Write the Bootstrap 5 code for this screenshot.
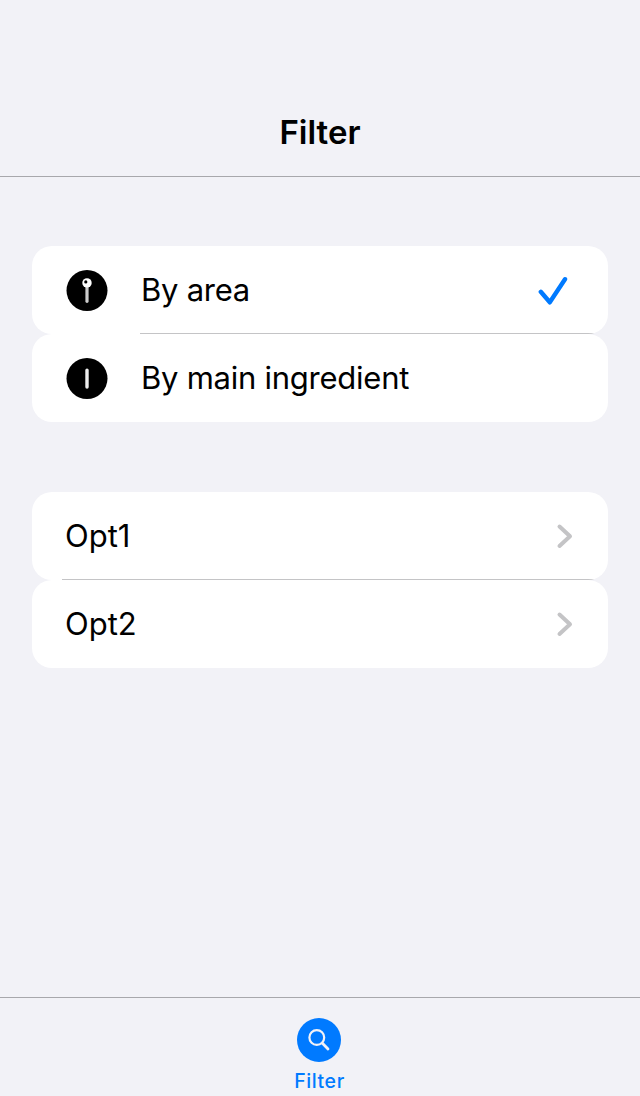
<!DOCTYPE html>
<html lang="en">
<head>
<meta charset="utf-8">
<meta name="viewport" content="width=device-width, initial-scale=1">
<title>Filter</title>
<link href="https://cdn.jsdelivr.net/npm/bootstrap@5.3.0/dist/css/bootstrap.min.css" rel="stylesheet">
<style>
body { font-family: Inter, "Liberation Sans", sans-serif; background: #f2f2f7; color: #000; }
svg { display: block; flex: none; }
.title-bar { height: 177px; padding-bottom: 24px; border-bottom: 1px solid #a8a8ac; }
.title-bar h1 { font-size: 33px; line-height: 40px; font-weight: 600; letter-spacing: 0; }
.options { padding: 69px 32px 0; gap: 70px; }
.option { height: 88px; border-radius: 20px; overflow: hidden; }
.option-body { height: 88px; font-size: 31px; line-height: 40px; padding-top: 1px; }
.option-icon { margin: 0 33px 0 34px; }
.area-text { letter-spacing: -.25px; padding-bottom: 2px; }
.opt-text { margin-left: 33px; letter-spacing: 0; padding-bottom: 2px; }
.divided .option-body { height: 87px; padding-top: 2px; }
.divider { height: 1px; background: #c4c4c6; }
.after-icon { margin-left: 108px; }
.after-edge { margin-left: 30px; }
.selected-mark { margin-right: 40px; }
.chevron { margin-right: 25px; }
.tab-bar { height: 99px; border-top: 1px solid #a8a8ac; padding: 20px 2px 0 0; }
.tab-link { color: #007aff; font-size: 19.5px; line-height: 24px; font-weight: 500; letter-spacing: .6px; }
.tab-link span { margin-top: 7px; padding-left: 1px; }
</style>
</head>
<body class="vh-100 d-flex flex-column overflow-hidden">
<header class="title-bar d-flex align-items-end justify-content-center"><h1 class="m-0">Filter</h1></header>
<main class="options d-flex flex-column flex-grow-1">
  <section>
    <div class="option divided bg-white">
      <div class="option-body d-flex align-items-center">
        <svg class="option-icon" width="42" height="42" viewBox="0 .5 42 42"><circle cx="21" cy="21" r="20.5"/><path d="M21 15V31.8" stroke="#ccc" stroke-width="3.2" stroke-linecap="round"/><circle cx="21" cy="13.4" r="4.7" fill="#fff"/><circle cx="19.8" cy="12.4" r="1.6"/></svg>
        <span class="area-text">By area</span>
        <svg class="selected-mark ms-auto" width="30" height="30" viewBox="0 0 30 30"><path d="M2.8 15.8L11.8 26.3L27 3.2" fill="none" stroke="#007aff" stroke-width="4.4" stroke-linecap="round" stroke-linejoin="round"/></svg>
      </div>
      <div class="divider after-icon"></div>
    </div>
    <div class="option bg-white">
      <div class="option-body d-flex align-items-center">
        <svg class="option-icon" width="42" height="42" viewBox="0 .5 42 42"><circle cx="21" cy="21" r="20.5"/><path d="M21 12.6V29.6" stroke="#eee" stroke-width="3.4" stroke-linecap="round"/></svg>
        <span class="area-text">By main ingredient</span>
      </div>
    </div>
  </section>
  <section>
    <div class="option divided bg-white">
      <div class="option-body d-flex align-items-center justify-content-between">
        <span class="opt-text">Opt1</span>
        <svg class="chevron" width="30" height="30" viewBox="0 0 30 30"><path d="M6.5 4.5L17 14.3L6.5 24" fill="none" stroke="#c4c4c6" stroke-width="4" stroke-linecap="round" stroke-linejoin="round"/></svg>
      </div>
      <div class="divider after-edge"></div>
    </div>
    <div class="option bg-white">
      <div class="option-body d-flex align-items-center justify-content-between">
        <span class="opt-text">Opt2</span>
        <svg class="chevron" width="30" height="30" viewBox="0 0 30 30"><path d="M6.5 4.5L17 14.3L6.5 24" fill="none" stroke="#c4c4c6" stroke-width="4" stroke-linecap="round" stroke-linejoin="round"/></svg>
      </div>
    </div>
  </section>
</main>
<nav class="tab-bar d-flex justify-content-center">
  <a class="tab-link d-flex flex-column align-items-center text-decoration-none" href="#">
    <svg width="44" height="44" viewBox="0 0 44 44"><circle cx="22" cy="22" r="22" fill="#007aff"/><circle cx="19.8" cy="19.5" r="7.4" fill="none" stroke="#f2f2f7" stroke-width="2.2"/><path d="M25.4 25.3L31 31" stroke="#f2f2f7" stroke-width="2.8" stroke-linecap="round"/></svg>
    <span>Filter</span>
  </a>
</nav>
<script src="https://cdn.jsdelivr.net/npm/bootstrap@5.3.0/dist/js/bootstrap.bundle.min.js"></script>
</body>
</html>
